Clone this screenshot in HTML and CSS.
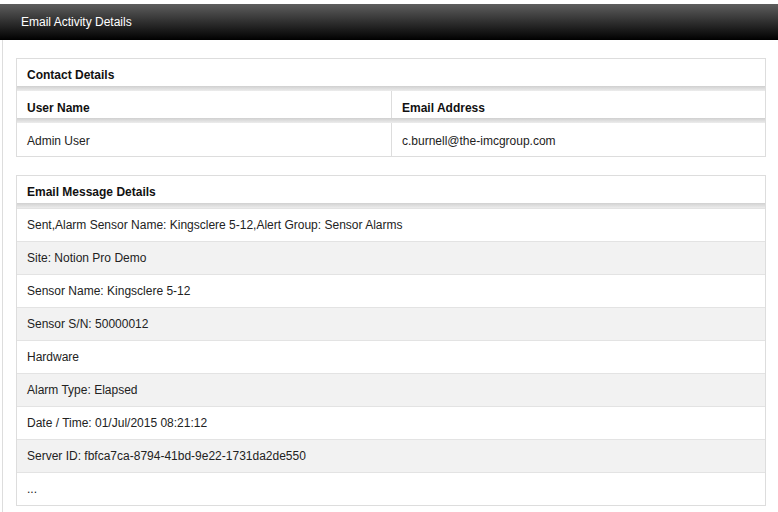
FILE: index.html
```html
<!DOCTYPE html>
<html lang="en">
<head>
  <meta charset="UTF-8">
  <title>Email Activity Details</title>
  <link rel="stylesheet" href="styles.css">
</head>
<body>
  <div class="page-header">Email Activity Details</div>

  <div class="content">
    <!-- Contact -->
    <div class="panel">
      <div class="panel-title">Contact Details</div>
      <div class="grid head">
        <div class="cell">User Name</div>
        <div class="cell">Email Address</div>
      </div>
      <div class="grid">
        <div class="cell">Admin User</div>
        <div class="cell">c.burnell@the-imcgroup.com</div>
      </div>
    </div>

    <!-- Message -->
    <div class="panel">
      <div class="panel-title">Email Message Details</div>
      <div class="msg-row">Sent,Alarm Sensor Name: Kingsclere 5-12,Alert Group: Sensor Alarms</div>
      <div class="msg-row">Site: Notion Pro Demo</div>
      <div class="msg-row">Sensor Name: Kingsclere 5-12</div>
      <div class="msg-row">Sensor S/N: 50000012</div>
      <div class="msg-row">Hardware</div>
      <div class="msg-row">Alarm Type: Elapsed</div>
      <div class="msg-row">Date / Time: 01/Jul/2015 08:21:12</div>
      <div class="msg-row">Server ID: fbfca7ca-8794-41bd-9e22-1731da2de550</div>
      <div class="msg-row">...</div>
    </div>
  </div>
</body>
</html>
```

FILE: styles.css
```css
body {
    margin: 0;
    padding-top: 4px;
    font-family: "Liberation Sans", Arial, sans-serif;
    font-size: 12px;
    line-height: 14px;
    color: #222;
    background: #fff;
}

.page-header {
    height: 36px;
    line-height: 36px;
    padding-left: 21px;
    color: #fff;
    background: linear-gradient(to bottom, #5e5e5e, #000);
}

.content {
    box-sizing: border-box;
    min-height: calc(100vh - 40px);
    margin-left: 2px;
    border-left: 1px solid #dddddd;
    padding: 18px 12px 0 13px;
}

.panel {
    border: 1px solid #dddddd;
    margin-bottom: 18px;
}

/* title + header rows get a little grey shade under them */
.panel-title,
.head {
    background: linear-gradient(to bottom, #d0d0d0, #ececec) bottom / 100% 5px no-repeat, #fff;
    padding-bottom: 5px;
}

.panel-title {
    font-weight: bold;
    color: #111;
    padding: 9px 10px 9px;
}

.grid {
    display: grid;
    grid-template-columns: 1fr 1fr;
}

.grid .cell {
    padding: 11px 10px 8px;
}

.grid .cell + .cell {
    border-left: 1px solid #dddddd;
}

.head .cell {
    font-weight: bold;
    color: #111;
    padding: 10px 10px 3px;
}

.msg-row {
    border-top: 1px solid #e3e3e3;
    padding: 9px 10px 9px;
}

.msg-row:nth-child(odd) {
    background: #f2f2f2;
}
```
